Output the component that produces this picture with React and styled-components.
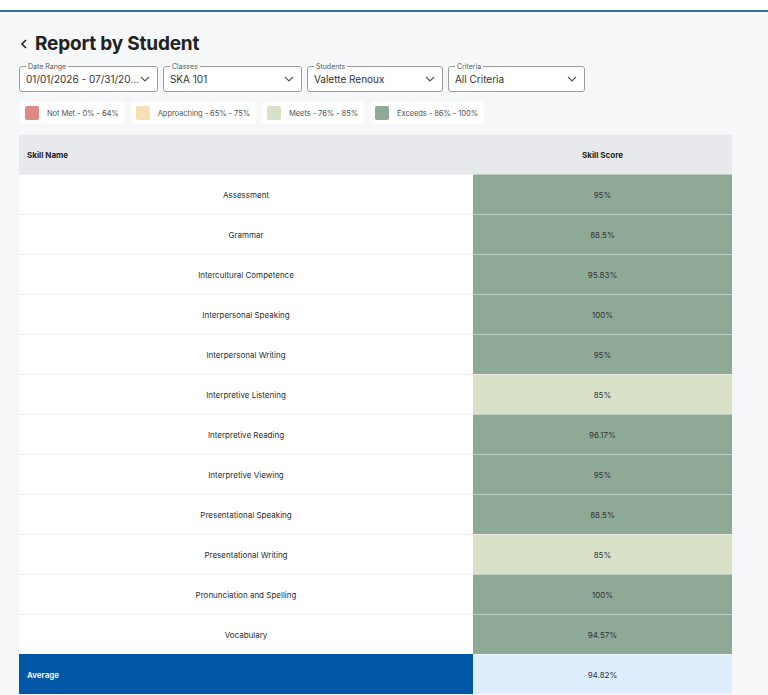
import React from "react";
import styled, { createGlobalStyle } from "styled-components";

const GlobalStyle = createGlobalStyle`
  body {
    margin: 0;
    background: #f6f7f8;
    font-family: Inter, "Noto Sans", sans-serif;
    color: #2b2b2b;
  }
`;

const TopBar = styled.div`
  height: 10px;
  background: #ffffff;
  border-bottom: 2px solid #3a6fa6;
`;

const Page = styled.div`
  padding: 18px 36px 0 19px;
`;

const Title = styled.h1`
  display: flex;
  align-items: center;
  gap: 7px;
  margin: 0 0 7px 1px;
  height: 26px;
  font-size: 19px;
  font-weight: 700;
  color: #222;
  letter-spacing: -0.2px;
`;

const Back = styled.svg`
  width: 8px;
  height: 10px;
  margin-top: 2px;
`;

const Filters = styled.div`
  display: flex;
  gap: 5px;
`;

const Field = styled.fieldset`
  width: ${(p) => p.$w}px;
  height: 29px;
  margin: 0;
  padding: 0 6px 0 6px;
  border: 1px solid #9b9b9b;
  border-radius: 3px;
  box-sizing: border-box;
  display: flex;
  align-items: center;
  justify-content: space-between;
  background: #fff;
`;

const Label = styled.legend`
  font-size: 7px;
  color: #555;
  padding: 0 2px;
  margin-left: 0;
  line-height: 7px;
`;

const Value = styled.span`
  font-size: 10px;
  color: #333;
  margin-top: -3px;
  white-space: nowrap;
`;

const Chevron = styled.svg`
  width: 12px;
  height: 12px;
  margin-top: -3px;
  flex-shrink: 0;
`;

const Legend = styled.div`
  display: flex;
  gap: 6px;
  margin: 10px 0 11px 1px;
`;

const Chip = styled.div`
  display: flex;
  align-items: center;
  gap: 8px;
  height: 22px;
  padding: 0 6px 0 5px;
  background: #fff;
  border-radius: 3px;
  font-size: 7.6px;
  letter-spacing: -0.1px;
  color: #555;
`;

const Swatch = styled.span`
  width: 14px;
  height: 14px;
  border-radius: 2px;
  background: ${(p) => p.$c};
`;

const Table = styled.div`
  width: 713px;
  display: grid;
  grid-template-columns: 454px 259px;
`;

const HeadCell = styled.div`
  height: 39px;
  background: #e7e9ed;
  display: flex;
  align-items: center;
  justify-content: ${(p) => (p.$center ? "center" : "flex-start")};
  padding-left: ${(p) => (p.$center ? 0 : 8)}px;
  font-size: 8px;
  font-weight: 700;
  color: #222;
`;

const NameCell = styled.div`
  height: 40px;
  box-sizing: border-box;
  background: ${(p) => (p.$avg ? "#0057a6" : "#fff")};
  color: ${(p) => (p.$avg ? "#fff" : "#2e2e2e")};
  border-top: 1px solid ${(p) => (p.$avg ? "#0057a6" : "#eeeeee")};
  display: flex;
  align-items: center;
  justify-content: ${(p) => (p.$avg ? "flex-start" : "center")};
  padding-left: ${(p) => (p.$avg ? 8 : 0)}px;
  font-size: 8px;
  font-weight: ${(p) => (p.$avg ? 600 : 400)};
`;

const ScoreCell = styled.div`
  height: 40px;
  box-sizing: border-box;
  background: ${(p) => p.$bg};
  border-top: 1px solid rgba(255, 255, 255, 0.45);
  display: flex;
  align-items: center;
  justify-content: center;
  font-size: 8px;
  color: #333;
`;

const EXCEEDS = "#8fa997";
const MEETS = "#d8e1c8";

const rows = [
  ["Assessment", "95%", EXCEEDS],
  ["Grammar", "88.5%", EXCEEDS],
  ["Intercultural Competence", "95.83%", EXCEEDS],
  ["Interpersonal Speaking", "100%", EXCEEDS],
  ["Interpersonal Writing", "95%", EXCEEDS],
  ["Interpretive Listening", "85%", MEETS],
  ["Interpretive Reading", "96.17%", EXCEEDS],
  ["Interpretive Viewing", "95%", EXCEEDS],
  ["Presentational Speaking", "88.5%", EXCEEDS],
  ["Presentational Writing", "85%", MEETS],
  ["Pronunciation and Spelling", "100%", EXCEEDS],
  ["Vocabulary", "94.57%", EXCEEDS],
];

const filters = [
  ["Date Range", "01/01/2026 - 07/31/20...", 138],
  ["Classes", "SKA 101", 139],
  ["Students", "Valette Renoux", 136],
  ["Criteria", "All Criteria", 137],
];

const legend = [
  ["#e08984", "Not Met - 0% - 64%"],
  ["#f6dfb7", "Approaching - 65% - 75%"],
  ["#d8e2c9", "Meets - 76% - 85%"],
  ["#8fa997", "Exceeds - 86% - 100%"],
];

function Select({ label, value, width }) {
  return (
    <Field $w={width}>
      <Label>{label}</Label>
      <Value>{value}</Value>
      <Chevron viewBox="0 0 12 12">
        <path d="M2 4l4 4 4-4" fill="none" stroke="#555" strokeWidth="1.1" />
      </Chevron>
    </Field>
  );
}

export default function App() {
  return (
    <>
      <GlobalStyle />
      <TopBar />
      <Page>
        <Title>
          <Back viewBox="0 0 8 10">
            <path d="M6 1L2 5l4 4" fill="none" stroke="#222" strokeWidth="1.6" />
          </Back>
          Report by Student
        </Title>
        <Filters>
          {filters.map(([l, v, w]) => (
            <Select key={l} label={l} value={v} width={w} />
          ))}
        </Filters>
        <Legend>
          {legend.map(([c, t]) => (
            <Chip key={t}>
              <Swatch $c={c} />
              {t}
            </Chip>
          ))}
        </Legend>
        <Table>
          <HeadCell>Skill Name</HeadCell>
          <HeadCell $center>Skill Score</HeadCell>
          {rows.map(([name, score, bg]) => (
            <React.Fragment key={name}>
              <NameCell>{name}</NameCell>
              <ScoreCell $bg={bg}>{score}</ScoreCell>
            </React.Fragment>
          ))}
          <NameCell $avg>Average</NameCell>
          <ScoreCell $bg="#dfeefc">94.82%</ScoreCell>
        </Table>
      </Page>
    </>
  );
}
